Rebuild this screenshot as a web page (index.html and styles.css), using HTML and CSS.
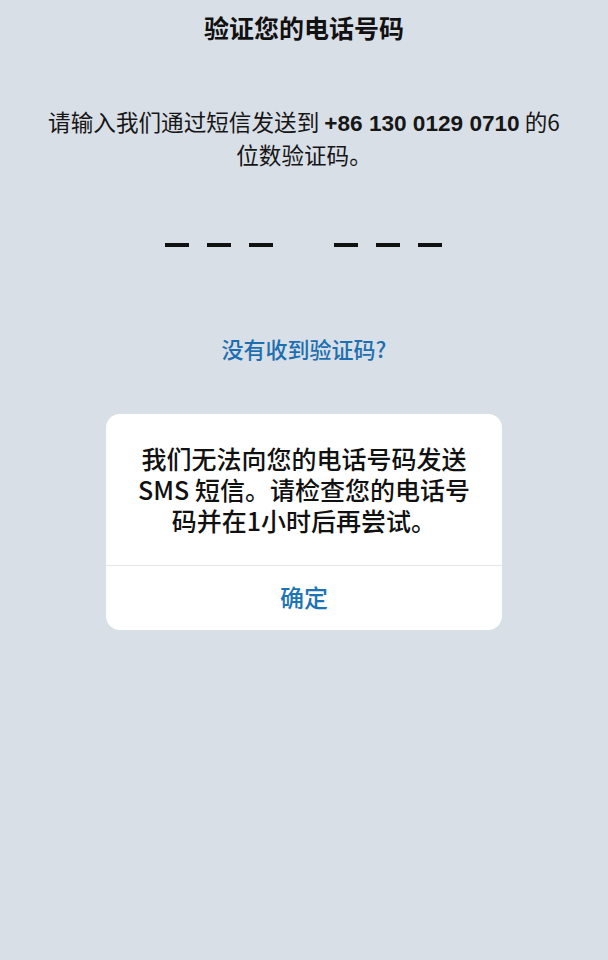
FILE: index.html
```html
<!DOCTYPE html>
<html>
    <head>
        <meta charset="utf-8">
        <title>验证您的电话号码</title>
        <link rel="stylesheet" href="styles.css">
    </head>

    <body>
        <div class="page">
            <h1 class="title">验证您的电话号码</h1>

            <p class="desc">
                请输入我们通过短信发送到 <b>+86 130 0129 0710</b> 的6<br>位数验证码。
            </p>

            <div class="code">
                <div class="group">
                    <span class="dash"></span>
                    <span class="dash"></span>
                    <span class="dash"></span>
                </div>
                <div class="group">
                    <span class="dash"></span>
                    <span class="dash"></span>
                    <span class="dash"></span>
                </div>
            </div><!--code-->

            <a class="resend" href="#">没有收到验证码?</a>

            <div class="alert">
                <p class="alert-msg">我们无法向您的电话号码发送 SMS 短信。请检查您的电话号码并在1小时后再尝试。</p>
                <button class="alert-btn">确定</button>
            </div><!--alert-->
        </div><!--page-->
    </body>
</html>
```

FILE: styles.css
```css
*{margin:0;padding:0;box-sizing:border-box;}

html, body{
    background-color: #d9dfe6;
}

body{
    width: 608px;
    height: 960px;
    font-family: "Noto Sans CJK SC", "Noto Sans", sans-serif;
    color: #111;
}

.page{
    display: flex;
    flex-direction: column;
    align-items: center;
    padding-top: 10px;
}

.title{
    font-size: 25px;
    line-height: 34px;
    font-weight: 700;
}

.desc{
    margin-top: 62px;
    font-size: 22.6px;
    line-height: 31px;
    text-align: center;
    color: #161616;
}

.desc b{
    font-family: "Liberation Sans", "Noto Sans CJK SC", sans-serif;
    font-weight: 700;
}

.code{
    display: flex;
    gap: 61px;
    margin-top: 73px;
    margin-left: -2px;
}

.group{
    display: flex;
    gap: 18px;
}

.dash{
    display: block;
    width: 24px;
    height: 4px;
    background-color: #111;
}

.resend{
    margin-top: 86px;
    font-size: 22px;
    line-height: 30px;
    font-weight: 500;
    color: #1d6fb0;
    text-decoration: none;
}

.alert{
    margin-top: 51px;
    width: 396px;
    background-color: #fff;
    border-radius: 14px;
    overflow: hidden;
}

.alert-msg{
    padding: 29px 28px 29px;
    font-size: 25px;
    line-height: 31px;
    font-weight: 500;
    text-align: center;
    border-bottom: 1px solid #e3e6ea;
}

.alert-btn{
    display: block;
    width: 100%;
    height: 64px;
    border: 0;
    background-color: transparent;
    font-family: inherit;
    font-size: 24px;
    font-weight: 500;
    color: #1d74b5;
    padding-bottom: 4px;
}
```
